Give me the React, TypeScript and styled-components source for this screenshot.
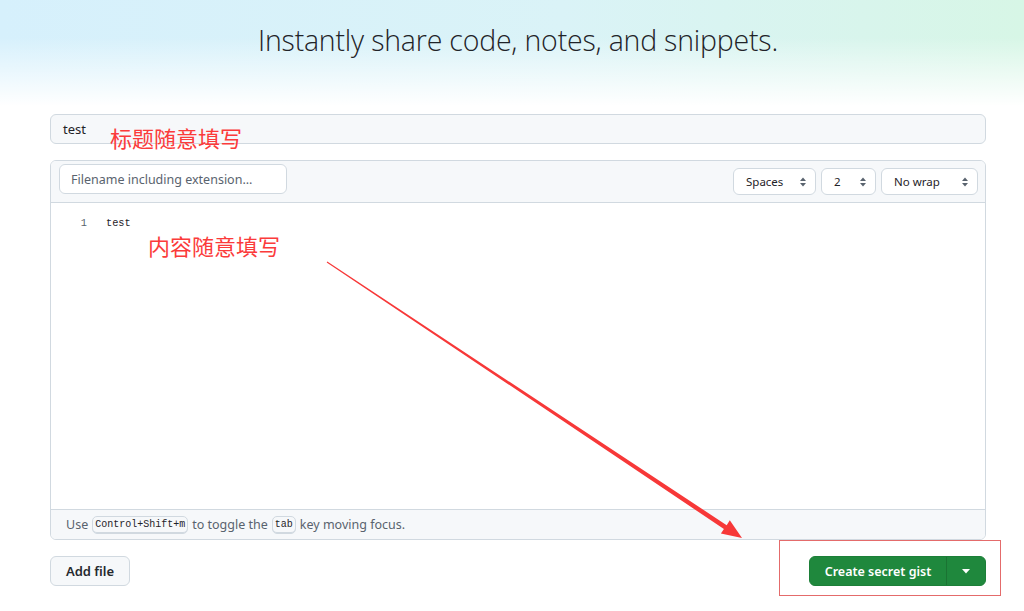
import React from "react";
import styled, { createGlobalStyle } from "styled-components";

const GlobalStyle = createGlobalStyle`
  html, body { margin: 0; padding: 0; background: #ffffff; }
  body {
    font-family: "Noto Sans", "Open Sans", "Liberation Sans", sans-serif;
    color: #1f2328;
  }
  * { box-sizing: border-box; }
`;

const Page = styled.div`
  position: relative;
  width: 1024px;
  height: 611px;
  overflow: hidden;
  background: #ffffff;
`;

const Hero = styled.div`
  height: 106px;
  padding-top: 20px;
  padding-left: 12px;
  text-align: center;
  background:
    linear-gradient(180deg, rgba(255, 255, 255, 0) 35%, #ffffff 100%),
    linear-gradient(90deg, #d6f0fc 0%, #daf3f7 55%, #d7f6e6 100%);
`;

const Heading = styled.h1`
  margin: 0;
  font-family: "Open Sans", "Noto Sans", sans-serif;
  font-weight: 300;
  font-size: 28.5px;
  line-height: 40px;
  color: #1f2328;
  letter-spacing: -0.2px;
`;

const Content = styled.div`
  padding: 8px 38px 0 50px;
  display: flex;
  flex-direction: column;
  gap: 16px;
`;

const TitleInput = styled.div`
  height: 30px;
  display: flex;
  align-items: center;
  padding: 0 12px;
  background: #f6f8fa;
  border: 1px solid #d1d9e0;
  border-radius: 6px;
  font-size: 13px;
  color: #1f2328;
`;

const Editor = styled.div`
  height: 380px;
  border: 1px solid #d1d9e0;
  border-radius: 6px;
  display: flex;
  flex-direction: column;
  overflow: hidden;
`;

const EditorHeader = styled.div`
  height: 42px;
  flex: none;
  background: #f6f8fa;
  border-bottom: 1px solid #d1d9e0;
  display: flex;
  align-items: flex-start;
  padding: 3px 7px 0 8px;
`;

const FilenameInput = styled.div`
  width: 228px;
  height: 30px;
  display: flex;
  align-items: center;
  padding: 0 11px;
  background: #ffffff;
  border: 1px solid #d1d9e0;
  border-radius: 6px;
  font-size: 12.5px;
  color: #59636e;
`;

const Options = styled.div`
  margin-left: auto;
  margin-top: 4px;
  display: flex;
  gap: 5px;
`;

const Select = styled.div<{ $w: number }>`
  width: ${(p) => p.$w}px;
  height: 27px;
  display: flex;
  align-items: center;
  justify-content: space-between;
  padding: 0 8px 0 12px;
  background: #ffffff;
  border: 1px solid #d1d9e0;
  border-radius: 6px;
  font-size: 11.5px;
  color: #1f2328;
`;

const EditorBody = styled.div`
  flex: 1;
  background: #ffffff;
  padding-top: 10px;
`;

const CodeLine = styled.div`
  display: flex;
  height: 20px;
  align-items: center;
  font-family: "Liberation Mono", "DejaVu Sans Mono", monospace;
  font-size: 10.3px;
`;

const LineNo = styled.span`
  width: 36px;
  text-align: right;
  color: #59636e;
`;

const Code = styled.span`
  margin-left: 19px;
  color: #1f2328;
`;

const EditorFooter = styled.div`
  height: 30px;
  flex: none;
  background: #f6f8fa;
  border-top: 1px solid #d1d9e0;
  display: flex;
  align-items: center;
  padding: 0 15px;
  font-size: 12.5px;
  color: #59636e;
  gap: 4px;
`;

const Kbd = styled.kbd`
  display: inline-flex;
  align-items: center;
  height: 18px;
  padding: 0 2px;
  font-family: "Liberation Mono", "DejaVu Sans Mono", monospace;
  font-size: 10px;
  color: #1f2328;
  background: #f6f8fa;
  border: 1px solid #d1d9e0;
  border-radius: 5px;
  box-shadow: inset 0 -1px 0 #d1d9e0;
`;

const Actions = styled.div`
  display: flex;
  justify-content: space-between;
  align-items: center;
`;

const Button = styled.button`
  height: 30px;
  width: 80px;
  padding: 0;
  background: #f6f8fa;
  border: 1px solid #d1d9e0;
  border-radius: 6px;
  font-family: inherit;
  font-size: 13px;
  font-weight: 600;
  color: #25292e;
`;

const SplitButton = styled.div`
  display: flex;
  height: 30px;
  border-radius: 6px;
  overflow: hidden;
  background: #1f883d;
  border: 1px solid #1c7f38;
`;

const PrimaryPart = styled.div`
  width: 136px;
  display: flex;
  align-items: center;
  justify-content: center;
  color: #ffffff;
  font-size: 12.5px;
  font-weight: 600;
`;

const CaretPart = styled.div`
  width: 39px;
  display: flex;
  align-items: center;
  justify-content: center;
  border-left: 1px solid #1b7333;
`;

const Note = styled.div<{ $x: number; $y: number }>`
  position: absolute;
  left: ${(p) => p.$x}px;
  top: ${(p) => p.$y}px;
  font-family: "Noto Sans CJK SC", sans-serif;
  font-size: 22px;
  font-weight: 400;
  line-height: 26px;
  color: #fb3b3b;
  white-space: nowrap;
`;

const Frame = styled.div`
  position: absolute;
  left: 779px;
  top: 540px;
  width: 222px;
  height: 56px;
  border: 1px solid #e46b6b;
`;

const Overlay = styled.svg`
  position: absolute;
  left: 0;
  top: 0;
  pointer-events: none;
`;

const UpDown = () => (
  <svg width="8" height="12" viewBox="0 0 8 12">
    <path d="M4 1.5 L7 5 L1 5 Z" fill="#59636e" />
    <path d="M4 10.5 L7 7 L1 7 Z" fill="#59636e" />
  </svg>
);

export default function App() {
  return (
    <Page>
      <GlobalStyle />
      <Hero>
        <Heading>Instantly share code, notes, and snippets.</Heading>
      </Hero>
      <Content>
        <TitleInput>test</TitleInput>
        <Editor>
          <EditorHeader>
            <FilenameInput>Filename including extension...</FilenameInput>
            <Options>
              <Select $w={83}>
                <span>Spaces</span>
                <UpDown />
              </Select>
              <Select $w={55}>
                <span>2</span>
                <UpDown />
              </Select>
              <Select $w={97}>
                <span>No wrap</span>
                <UpDown />
              </Select>
            </Options>
          </EditorHeader>
          <EditorBody>
            <CodeLine>
              <LineNo>1</LineNo>
              <Code>test</Code>
            </CodeLine>
          </EditorBody>
          <EditorFooter>
            <span>Use</span>
            <Kbd>Control+Shift+m</Kbd>
            <span>to toggle the</span>
            <Kbd>tab</Kbd>
            <span>key moving focus.</span>
          </EditorFooter>
        </Editor>
        <Actions>
          <Button>Add file</Button>
          <SplitButton>
            <PrimaryPart>Create secret gist</PrimaryPart>
            <CaretPart>
              <svg width="8" height="5" viewBox="0 0 8 5">
                <path d="M0 0 L8 0 L4 4.5 Z" fill="#ffffff" />
              </svg>
            </CaretPart>
          </SplitButton>
        </Actions>
      </Content>

      <Note $x={110} $y={124}>标题随意填写</Note>
      <Note $x={148} $y={232}>内容随意填写</Note>
      <Frame />
      <Overlay width="1024" height="611" viewBox="0 0 1024 611">
        <polygon
          points="327.3,261.6 726.7,525.2 729.8,520.3 742,538 720.9,533.6 723.9,529 326.7,262.4"
          fill="#f73838"
        />
      </Overlay>
    </Page>
  );
}
